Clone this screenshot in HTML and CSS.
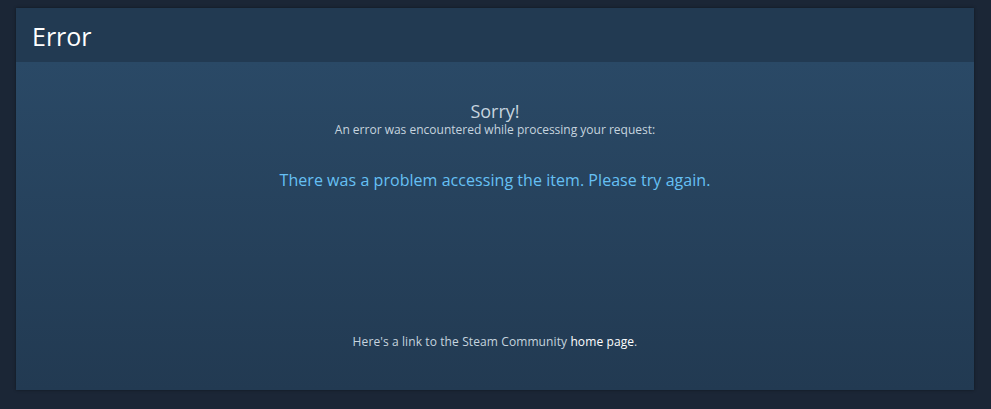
FILE: index.html
```html
<!DOCTYPE html>
<html>
<head>
<meta charset="utf-8">
<link rel="stylesheet" href="styles.css">
</head>
<body>
<div class="panel">
  <div class="header"><h1 class="title">Error</h1></div>
  <div class="content">
    <div class="sorry">Sorry!</div>
    <div class="sub">An error was encountered while processing your request:</div>
    <div class="msg">There was a problem accessing the item. Please try again.</div>
    <div class="footer">Here's a link to the Steam Community <a class="home" href="#">home page</a>.</div>
  </div>
</div>
</body>
</html>
```
FILE: styles.css
```css
html, body { height: 100%; }
body {
  margin: 0;
  background: #1b2636;
  font-family: "Open Sans", "Noto Sans", Arial, sans-serif;
  padding: 8px 17px 19px 16px;
  box-sizing: border-box;
}
.panel {
  height: 382px;
  display: flex;
  flex-direction: column;
  box-shadow: 0 0 3px rgba(0,0,0,0.4);
}
.header {
  height: 54px;
  background: #223a52;
  display: flex;
  align-items: center;
  padding-left: 16px;
}
.title {
  margin: 0;
  font-weight: normal;
  font-size: 25px;
  color: #ffffff;
  line-height: 1;
  padding-top: 2px;
}
.content {
  flex: 1;
  background: linear-gradient(to bottom, #2a4966 0%, #223a52 100%);
  display: flex;
  flex-direction: column;
  align-items: center;
  padding-top: 38px;
}
.sorry {
  font-size: 18px;
  color: #c6d4df;
  line-height: 22px;
}
.sub {
  font-size: 12px;
  color: #c6d4df;
  line-height: 16px;
}
.msg {
  margin-top: 32px;
  font-size: 16px;
  color: #66c0f4;
  line-height: 20px;
  letter-spacing: 0.05px;
}
.footer {
  margin-top: auto;
  margin-bottom: 40px;
  font-size: 12px;
  color: #c6d4df;
  letter-spacing: 0.1px;
}
.home { color: #ffffff; text-decoration: none; }
```
